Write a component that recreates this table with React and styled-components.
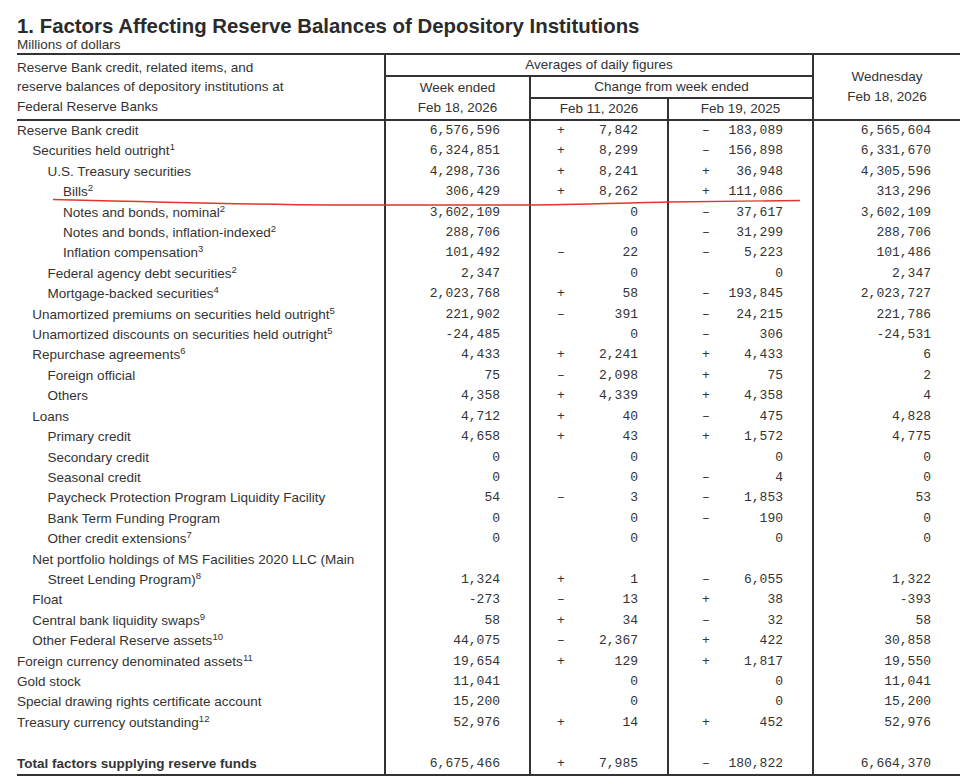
import React from 'react'
import styled, { createGlobalStyle } from 'styled-components'

const GlobalStyle = createGlobalStyle`
  body {
    margin: 0;
    background: #fff;
    color: #333;
    font-family: "Liberation Sans", Arial, sans-serif;
  }
`

const rows = [
  [0, 'Reserve Bank credit', null, '6,576,596', ['+', '7,842'], ['-', '183,089'], '6,565,604'],
  [1, 'Securities held outright', '1', '6,324,851', ['+', '8,299'], ['-', '156,898'], '6,331,670'],
  [2, 'U.S. Treasury securities', null, '4,298,736', ['+', '8,241'], ['+', '36,948'], '4,305,596'],
  [3, 'Bills', '2', '306,429', ['+', '8,262'], ['+', '111,086'], '313,296'],
  [3, 'Notes and bonds, nominal', '2', '3,602,109', ['', '0'], ['-', '37,617'], '3,602,109'],
  [3, 'Notes and bonds, inflation-indexed', '2', '288,706', ['', '0'], ['-', '31,299'], '288,706'],
  [3, 'Inflation compensation', '3', '101,492', ['-', '22'], ['-', '5,223'], '101,486'],
  [2, 'Federal agency debt securities', '2', '2,347', ['', '0'], ['', '0'], '2,347'],
  [2, 'Mortgage-backed securities', '4', '2,023,768', ['+', '58'], ['-', '193,845'], '2,023,727'],
  [1, 'Unamortized premiums on securities held outright', '5', '221,902', ['-', '391'], ['-', '24,215'], '221,786'],
  [1, 'Unamortized discounts on securities held outright', '5', '-24,485', ['', '0'], ['-', '306'], '-24,531'],
  [1, 'Repurchase agreements', '6', '4,433', ['+', '2,241'], ['+', '4,433'], '6'],
  [2, 'Foreign official', null, '75', ['-', '2,098'], ['+', '75'], '2'],
  [2, 'Others', null, '4,358', ['+', '4,339'], ['+', '4,358'], '4'],
  [1, 'Loans', null, '4,712', ['+', '40'], ['-', '475'], '4,828'],
  [2, 'Primary credit', null, '4,658', ['+', '43'], ['+', '1,572'], '4,775'],
  [2, 'Secondary credit', null, '0', ['', '0'], ['', '0'], '0'],
  [2, 'Seasonal credit', null, '0', ['', '0'], ['-', '4'], '0'],
  [2, 'Paycheck Protection Program Liquidity Facility', null, '54', ['-', '3'], ['-', '1,853'], '53'],
  [2, 'Bank Term Funding Program', null, '0', ['', '0'], ['-', '190'], '0'],
  [2, 'Other credit extensions', '7', '0', ['', '0'], ['', '0'], '0'],
  [1, ['Net portfolio holdings of MS Facilities 2020 LLC (Main', 'Street Lending Program)'], '8', '1,324', ['+', '1'], ['-', '6,055'], '1,322'],
  [1, 'Float', null, '-273', ['-', '13'], ['+', '38'], '-393'],
  [1, 'Central bank liquidity swaps', '9', '58', ['+', '34'], ['-', '32'], '58'],
  [1, 'Other Federal Reserve assets', '10', '44,075', ['-', '2,367'], ['+', '422'], '30,858'],
  [0, 'Foreign currency denominated assets', '11', '19,654', ['+', '129'], ['+', '1,817'], '19,550'],
  [0, 'Gold stock', null, '11,041', ['', '0'], ['', '0'], '11,041'],
  [0, 'Special drawing rights certificate account', null, '15,200', ['', '0'], ['', '0'], '15,200'],
  [0, 'Treasury currency outstanding', '12', '52,976', ['+', '14'], ['+', '452'], '52,976'],
]

const total = ['Total factors supplying reserve funds', '6,675,466', ['+', '7,985'], ['-', '180,822'], '6,664,370']

const Page = styled.div`
  position: relative;
  width: 975px;
  padding: 14px 0 0 17px;
  box-sizing: border-box;
`

const Title = styled.h1`
  margin: 0;
  font-size: 20.4px;
  line-height: 24px;
  font-weight: bold;
  color: #2b2b2b;
`

const Unit = styled.div`
  font-size: 13.5px;
  line-height: 16px;
  margin-top: -1px;
`

const Table = styled.table`
  width: 943px;
  border-collapse: collapse;
  table-layout: fixed;
  font-size: 13.5px;
  color: #333;
  border-top: 2px solid #333;
  border-bottom: 2px solid #333;
`

const Head = styled.th`
  font-weight: normal;
  text-align: ${p => (p.$left ? 'left' : 'center')};
  vertical-align: middle;
  padding: 0;
  height: 20px;
  line-height: ${p => (p.$lh ? p.$lh : 20)}px;
  border-left: ${p => (p.$noLeft ? 'none' : '2px solid #333')};
  border-bottom: 2px solid #333;
`

const Label = styled.td`
  padding: 0 0 0 ${p => p.$indent * 15.3}px;
  line-height: 20.4px;
  height: 20.4px;
  white-space: nowrap;
  font-weight: ${p => (p.$bold ? 'bold' : 'normal')};
  vertical-align: bottom;
`

const Cont = styled.span`
  display: block;
  padding-left: 15.5px;
`

const Sup = styled.sup`
  font-size: 9.5px;
  line-height: 0;
  vertical-align: 5px;
`

const Num = styled.td`
  border-left: 2px solid #333;
  padding: 0 29px 0 0;
  text-align: right;
  vertical-align: bottom;
  line-height: 20.4px;
  height: 20.4px;
  font-family: "Liberation Mono", "Courier New", monospace;
  font-size: 13px;
  white-space: pre;
`

const Signed = styled.span`
  display: inline-flex;
  justify-content: space-between;
  vertical-align: top;
  width: 81px;
`

const Overlay = styled.svg`
  position: absolute;
  left: 0;
  top: 0;
  pointer-events: none;
`

const Change = ({ v }) => (
  <Num>
    <Signed>
      <span>{v[0] === '-' ? '–' : v[0] || '\u00a0'}</span>
      <span>{v[1]}</span>
    </Signed>
  </Num>
)

const LabelText = ({ text, sup }) => {
  if (Array.isArray(text)) {
    return (
      <>
        {text[0]}
        <Cont>
          {text[1]}
          {sup && <Sup>{sup}</Sup>}
        </Cont>
      </>
    )
  }
  return (
    <>
      {text}
      {sup && <Sup>{sup}</Sup>}
    </>
  )
}

export default function App() {
  return (
    <Page>
      <GlobalStyle />
      <Title>1. Factors Affecting Reserve Balances of Depository Institutions</Title>
      <Unit>Millions of dollars</Unit>
      <Table>
        <colgroup>
          <col style={{ width: 368 }} />
          <col style={{ width: 145 }} />
          <col style={{ width: 138 }} />
          <col style={{ width: 145 }} />
          <col style={{ width: 147 }} />
        </colgroup>
        <thead>
          <tr>
            <Head $left $noLeft rowSpan={3} $lh={19.5}>
              Reserve Bank credit, related items, and
              <br />
              reserve balances of depository institutions at
              <br />
              Federal Reserve Banks
            </Head>
            <Head colSpan={3}>Averages of daily figures</Head>
            <Head rowSpan={3}>
              Wednesday
              <br />
              Feb 18, 2026
            </Head>
          </tr>
          <tr>
            <Head rowSpan={2}>
              Week ended
              <br />
              Feb 18, 2026
            </Head>
            <Head colSpan={2}>Change from week ended</Head>
          </tr>
          <tr>
            <Head>Feb 11, 2026</Head>
            <Head>Feb 19, 2025</Head>
          </tr>
        </thead>
        <tbody>
          {rows.map((r, i) => (
            <tr key={i}>
              <Label $indent={r[0]}>
                <LabelText text={r[1]} sup={r[2]} />
              </Label>
              <Num>{r[3]}</Num>
              <Change v={r[4]} />
              <Change v={r[5]} />
              <Num>{r[6]}</Num>
            </tr>
          ))}
          <tr>
            <Label $indent={0}>&nbsp;</Label>
            <Num />
            <Num />
            <Num />
            <Num />
          </tr>
          <tr>
            <Label $indent={0} $bold>
              {total[0]}
            </Label>
            <Num>{total[1]}</Num>
            <Change v={total[2]} />
            <Change v={total[3]} />
            <Num>{total[4]}</Num>
          </tr>
        </tbody>
      </Table>
      <Overlay width="975" height="781" viewBox="0 0 975 781">
        <path
          d="M53 199.5 C 150 202, 250 204.5, 333 205 L 530 205 C 580 204.5, 610 203.5, 668 202 C 720 201, 770 200.5, 800 200.5"
          fill="none"
          stroke="#e2352c"
          strokeWidth="1.4"
        />
      </Overlay>
    </Page>
  )
}
